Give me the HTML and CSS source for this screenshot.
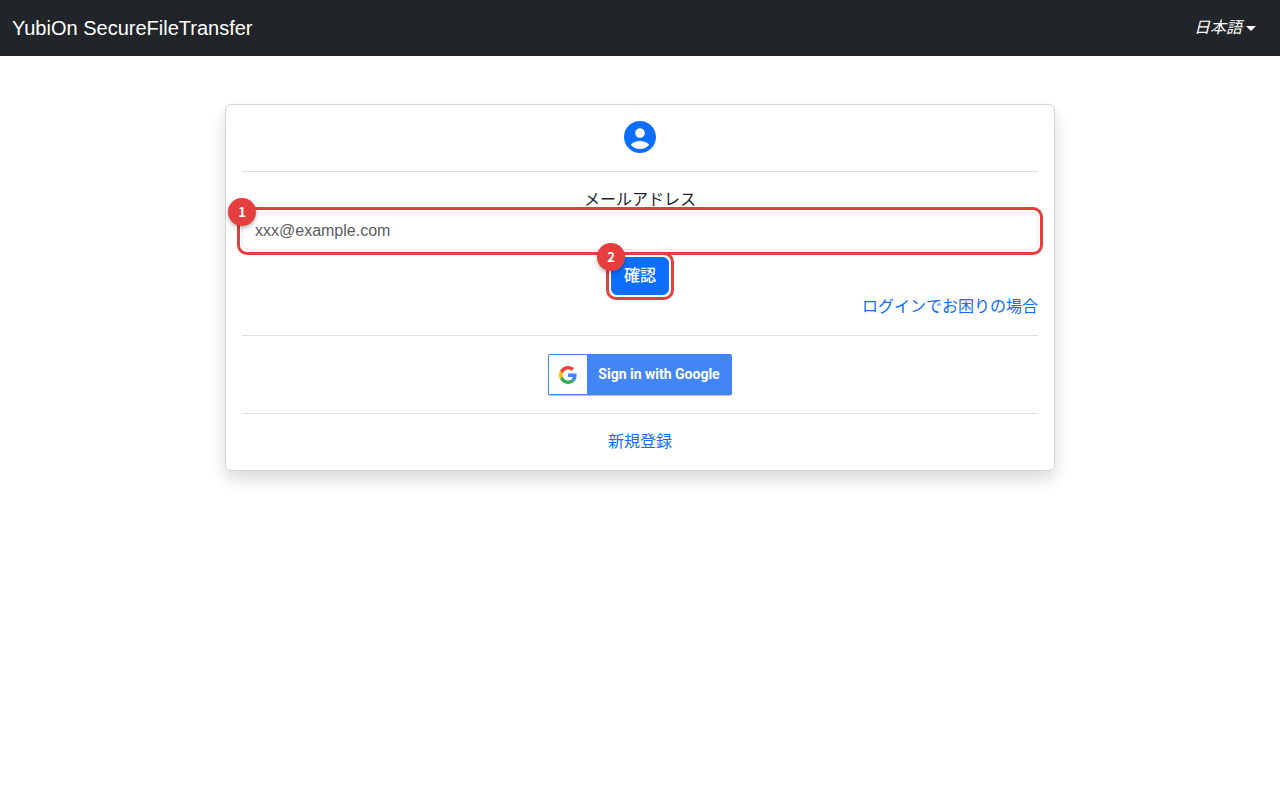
FILE: index.html
```html
<!DOCTYPE html>
<html lang="ja">
<head>
    <meta charset="UTF-8">
    <meta name="viewport" content="width=device-width, initial-scale=1.0">
    <title>YubiOn SecureFileTransfer</title>
    <link rel="stylesheet" href="styles.css">
</head>
<body>
    <header class="navbar">
        <a class="brand" href="#">YubiOn SecureFileTransfer</a>
        <button class="lang-toggle" type="button"><em>日本語</em></button>
    </header>
    <main class="container">
        <div class="card">
            <div class="card-icon">
                <svg width="32" height="32" viewBox="2 2 20 20" fill="#0d6efd" aria-hidden="true">
                    <path d="M12 2C6.48 2 2 6.48 2 12s4.48 10 10 10 10-4.480 10-10S17.520 2 12 2zm0 4.500c1.660 0 3 1.340 3 3s-1.340 3-3 3-3-1.340-3-3 1.340-3 3-3zm0 13c-2.300 0-4.400-1-5.800-2.700C7.700 15.300 9.700 14.500 12 14.500s4.300.8 5.800 2.300C16.400 18.500 14.300 19.500 12 19.500z"/>
                </svg>
            </div>
            <hr>
            <form class="login-form">
                <label for="email">メールアドレス</label>
                <div class="marked">
                    <input id="email" type="email" placeholder="xxx@example.com">
                    <span class="marker">1</span>
                </div>
                <div class="marked marked-button">
                    <button class="btn" type="button">確認</button>
                    <span class="marker">2</span>
                </div>
                <a class="help-link" href="#">ログインでお困りの場合</a>
            </form>
            <hr>
            <button class="google-btn" type="button">
                <span class="google-logo">
                    <svg width="18" height="18" viewBox="0 0 48 48" aria-hidden="true">
                        <path fill="#ea4335" d="M24 9.500c3.540 0 6.710 1.220 9.210 3.600l6.850-6.850C35.900 2.380 30.470 0 24 0 14.620 0 6.510 5.380 2.560 13.220l7.980 6.190C12.430 13.720 17.740 9.500 24 9.500z"/>
                        <path fill="#4285f4" d="M46.980 24.550c0-1.570-.15-3.090-.38-4.550H24v9.020h12.940c-.58 2.960-2.260 5.480-4.780 7.180l7.730 6c4.510-4.180 7.090-10.360 7.090-17.650z"/>
                        <path fill="#fbbc05" d="M10.530 28.590c-.48-1.450-.76-2.990-.76-4.590s.27-3.140.76-4.590l-7.980-6.190C.92 16.460 0 20.120 0 24c0 3.880.92 7.540 2.560 10.780l7.970-6.190z"/>
                        <path fill="#34a853" d="M24 48c6.480 0 11.930-2.130 15.890-5.810l-7.730-6c-2.150 1.450-4.920 2.300-8.160 2.300-6.260 0-11.570-4.220-13.470-9.910l-7.980 6.190C6.510 42.620 14.620 48 24 48z"/>
                    </svg>
                </span>
                <span class="google-text">Sign in with Google</span>
            </button>
            <hr>
            <a class="signup-link" href="#">新規登録</a>
        </div>
    </main>
</body>
</html>
```
FILE: styles.css
```css
* {
    box-sizing: border-box;
}
body {
    margin: 0;
    font-family: "Liberation Sans", "Noto Sans CJK JP", sans-serif;
    font-size: 16px;
    line-height: 24px;
    color: #212529;
    background-color: #fff;
}
a {
    color: #0d6efd;
    text-decoration: none;
}
a:hover {
    text-decoration: underline;
}
button, input {
    font: inherit;
}
button {
    cursor: pointer;
}
.navbar {
    display: flex;
    align-items: center;
    justify-content: space-between;
    height: 56px;
    padding: 0 24px 0 12px;
    background-color: #212529;
}
.brand {
    font-size: 20px;
    color: #fff;
}
.lang-toggle {
    display: flex;
    align-items: center;
    gap: 4px;
    padding: 0;
    border: none;
    background: none;
    color: #fff;
}
.lang-toggle::after {
    content: "";
    border-top: 5px solid #fff;
    border-left: 5px solid transparent;
    border-right: 5px solid transparent;
}
.container {
    max-width: 862px;
    margin: 0 auto;
    padding: 48px 16px;
}
.card {
    display: flex;
    flex-direction: column;
    align-items: center;
    padding: 16px;
    border: 1px solid #d4d4d4;
    border-radius: 6px;
    box-shadow: 0 8px 16px rgba(0, 0, 0, 0.15);
}
.card-icon {
    height: 34px;
}
.card hr {
    width: 100%;
    margin: 16px 0;
    border: none;
    border-top: 1px solid #dedfe0;
}
.login-form {
    display: flex;
    flex-direction: column;
    align-items: center;
    width: 100%;
}
.login-form input {
    display: block;
    width: 100%;
    height: 38px;
    padding: 6px 12px;
    border: 1px solid #e9ebed;
    border-radius: 6px;
    color: #212529;
}
.login-form input::placeholder {
    color: #595c5f;
}
.btn {
    display: block;
    height: 38px;
    padding: 6px 12px;
    border: 1px solid #0d6efd;
    border-radius: 6px;
    background-color: #0d6efd;
    color: #fff;
    font-weight: 500;
}
.help-link {
    align-self: flex-end;
}

/* numbered red frames */
.marked {
    position: relative;
    width: 100%;
}
.marked-button {
    width: auto;
    margin-top: 7px;
}
.marked::after {
    content: "";
    position: absolute;
    inset: -5px;
    border: 3px solid #e53e3e;
    border-radius: 10px;
    pointer-events: none;
}
.marker {
    position: absolute;
    top: -14px;
    left: -14px;
    z-index: 1;
    width: 28px;
    height: 28px;
    border-radius: 50%;
    background-color: #e53e3e;
    box-shadow: 0 2px 4px rgba(0, 0, 0, 0.3);
    color: #fff;
    font-family: "Noto Sans CJK JP", sans-serif;
    font-size: 13px;
    font-weight: 700;
    line-height: 28px;
    text-align: center;
}
.google-btn {
    display: flex;
    height: 41px;
    margin: 2px 0;
    padding: 1px;
    border: none;
    border-radius: 2px;
    background-color: #4285f4;
    box-shadow: 0 1px 1px rgba(0, 0, 0, 0.25);
    color: #fff;
    font-family: Roboto, sans-serif;
    font-size: 14px;
    font-weight: 700;
}
.google-logo {
    display: flex;
    align-items: center;
    justify-content: center;
    width: 38px;
    height: 39px;
    border-radius: 1px;
    background-color: #fff;
}
.google-text {
    padding: 0 11px;
    line-height: 38px;
}
```
